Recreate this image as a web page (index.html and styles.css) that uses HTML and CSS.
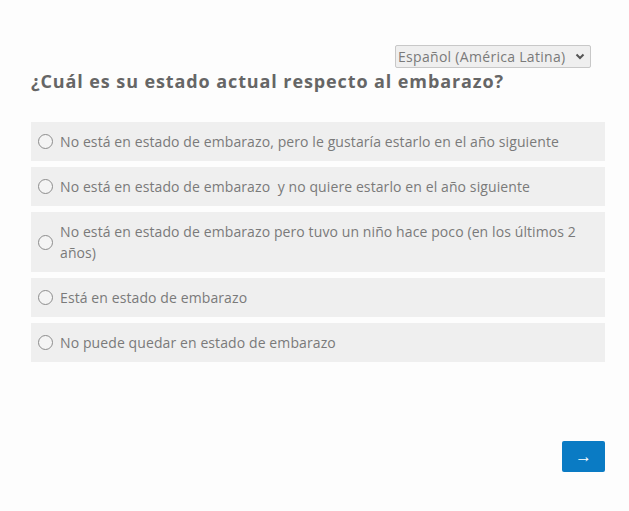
FILE: index.html
```html
<!DOCTYPE html>
<html lang="es">
<head>
    <meta charset="UTF-8">
    <meta name="viewport" content="width=device-width, initial-scale=1.0">
    <title>Encuesta</title>
    <link rel="stylesheet" href="styles.css">
</head>
<body>

    <div class="survey">
        <div class="lang-row">
            <div class="lang-wrap">
                <select class="lang-select">
                    <option>Español (América Latina)</option>
                </select>
                <svg class="chevron" width="10" height="7" viewBox="0 0 10 7">
                    <path d="M1.5 1.5 L5 5 L8.5 1.5" fill="none" stroke="#555" stroke-width="2"/>
                </svg>
            </div>
        </div>

        <h1 class="question">¿Cuál es su estado actual respecto al embarazo?</h1>

        <div class="options">
            <label class="option">
                <input type="radio" name="embarazo">
                <span>No está en estado de embarazo, pero le gustaría estarlo en el año siguiente</span>
            </label>
            <label class="option">
                <input type="radio" name="embarazo">
                <span>No está en estado de embarazo&nbsp; y no quiere estarlo en el año siguiente</span>
            </label>
            <label class="option">
                <input type="radio" name="embarazo">
                <span>No está en estado de embarazo pero tuvo un niño hace poco (en los últimos 2 años)</span>
            </label>
            <label class="option">
                <input type="radio" name="embarazo">
                <span>Está en estado de embarazo</span>
            </label>
            <label class="option">
                <input type="radio" name="embarazo">
                <span>No puede quedar en estado de embarazo</span>
            </label>
        </div>

        <div class="nav">
            <button class="next-btn">&rarr;</button>
        </div>
    </div>

</body>
</html>
```

FILE: styles.css
```css
body {
    font-family: "Open Sans", Arial, sans-serif;
    background-color: #fdfdfd;
    margin: 0;
    color: #707070;
}

.survey {
    padding: 45px 24px 0 31px;
}

/* Language picker */
.lang-row {
    display: flex;
    justify-content: flex-end;
    padding-right: 14px;
}

.lang-wrap {
    position: relative;
}

.lang-select {
    appearance: none;
    -webkit-appearance: none;
    width: 196px;
    height: 23px;
    padding: 0 0 0 2px;
    font-family: inherit;
    font-size: 14px;
    letter-spacing: 0.3px;
    color: #7a7a7a;
    background-color: #efefef;
    border: 1px solid #c8c8c8;
    border-radius: 2px;
}

.lang-wrap .chevron {
    position: absolute;
    right: 6px;
    top: 8px;
    pointer-events: none;
}

.question {
    font-size: 18px;
    font-weight: 700;
    letter-spacing: 0.9px;
    color: #666;
    margin: 0 0 28px 0;
    line-height: 26px;
}

/* Answer list */
.options {
    display: flex;
    flex-direction: column;
    gap: 6px;
}

.option {
    display: flex;
    align-items: center;
    background-color: #efefef;
    padding: 9px 20px 9px 7px;
    font-size: 14px;
    line-height: 21px;
    letter-spacing: 0.1px;
    color: #7a7a7a;
    cursor: pointer;
}

.option input {
    appearance: none;
    -webkit-appearance: none;
    width: 15px;
    height: 15px;
    margin: 0 7px 0 0;
    border: 1px solid #8c8c8c;
    border-radius: 50%;
    background-color: #f4f4f4;
    flex-shrink: 0;
}

.option input:checked {
    background-color: #0a7bc4;
    box-shadow: inset 0 0 0 3px #f4f4f4;
}

.nav {
    display: flex;
    justify-content: flex-end;
    margin-top: 79px;
}

.next-btn {
    width: 43px;
    height: 31px;
    background-color: #0a7bc4;
    color: white;
    border: none;
    border-radius: 2px;
    font-size: 17px;
    cursor: pointer;
}
```
